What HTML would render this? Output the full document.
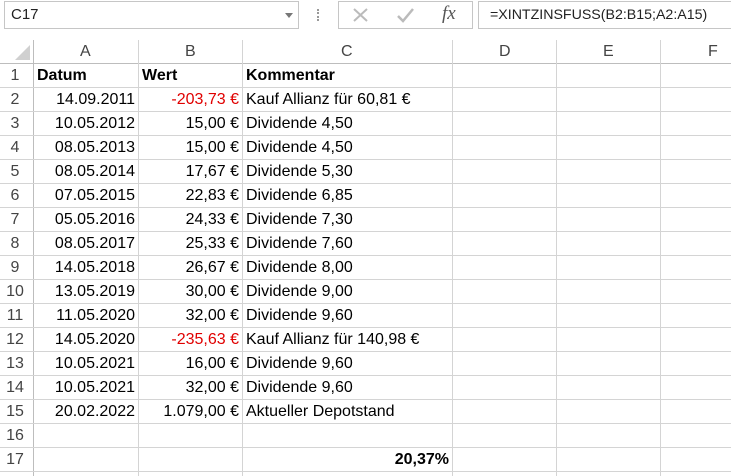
<!DOCTYPE html>
<html><head><meta charset="utf-8"><style>
body{margin:0;width:731px;height:476px;overflow:hidden;background:#fff;font-family:"Liberation Sans",Arial,sans-serif;position:relative}
.a{position:absolute;box-sizing:border-box}
.t{position:absolute;font-size:16px;line-height:24px;white-space:nowrap;color:#000}
.h{color:#444;font-size:16px}
.vl{position:absolute;width:1px;background:#d4d4d4;top:40px;height:436px}
.hl{position:absolute;height:1px;background:#d4d4d4;left:0;width:731px}
</style></head><body>
<div class="a" style="left:0;top:0;width:731px;height:36px;background:#fff"></div>
<div class="a" style="left:4px;top:1px;width:295px;height:28px;border:1px solid #c6c6c6"></div>
<div class="t" style="left:11px;top:3px;color:#222;font-size:15px">C17</div>
<div class="a" style="left:285px;top:13px;width:0;height:0;border-left:4px solid transparent;border-right:4px solid transparent;border-top:5px solid #777"></div>
<div class="a" style="left:317px;top:9px;width:2px;height:12px;border-left:2px dotted #999"></div>
<div class="a" style="left:338px;top:1px;width:135px;height:28px;border:1px solid #c6c6c6"></div>
<svg class="a" style="left:352px;top:7px" width="18" height="16"><path d="M2 2L15 14M15 2L2 14" stroke="#bbb" stroke-width="2"/></svg>
<svg class="a" style="left:396px;top:7px" width="20" height="16"><path d="M2 9L7 14L17 2" stroke="#bbb" stroke-width="2.5" fill="none"/></svg>
<div class="t" style="left:442px;top:2px;font-family:'Liberation Serif',serif;font-style:italic;font-size:19px;color:#555">fx</div>
<div class="a" style="left:478px;top:1px;width:260px;height:28px;border:1px solid #c6c6c6"></div>
<div class="t" style="left:490px;top:3px;color:#222;font-size:14.2px">=XINTZINSFUSS(B2:B15;A2:A15)</div>
<div class="a" style="left:0;top:40px;width:731px;height:24px;border-bottom:1px solid #bdbdbd"></div>
<div class="a" style="left:0;top:40px;width:34px;height:436px;border-right:1px solid #bdbdbd"></div>
<svg class="a" style="left:15px;top:44px" width="16" height="17"><path d="M15 1V16H0Z" fill="#d0d0d0"/></svg>
<div class="vl" style="left:138px"></div><div class="vl" style="left:242px"></div><div class="vl" style="left:452px"></div><div class="vl" style="left:556px"></div><div class="vl" style="left:660px"></div>
<div class="t h" style="left:80px;top:40px">A</div>
<div class="t h" style="left:185px;top:40px">B</div>
<div class="t h" style="left:341px;top:40px">C</div>
<div class="t h" style="left:499px;top:40px">D</div>
<div class="t h" style="left:603px;top:40px">E</div>
<div class="t h" style="left:708px;top:40px">F</div>
<div id="g"></div>
<script>
var rows=[["<b>Datum</b>","<b>Wert</b>","<b>Kommentar</b>"],
["14.09.2011","-203,73 €","Kauf Allianz für 60,81 €",1],
["10.05.2012","15,00 €","Dividende 4,50"],
["08.05.2013","15,00 €","Dividende 4,50"],
["08.05.2014","17,67 €","Dividende 5,30"],
["07.05.2015","22,83 €","Dividende 6,85"],
["05.05.2016","24,33 €","Dividende 7,30"],
["08.05.2017","25,33 €","Dividende 7,60"],
["14.05.2018","26,67 €","Dividende 8,00"],
["13.05.2019","30,00 €","Dividende 9,00"],
["11.05.2020","32,00 €","Dividende 9,60"],
["14.05.2020","-235,63 €","Kauf Allianz für 140,98 €",1],
["10.05.2021","16,00 €","Dividende 9,60"],
["10.05.2021","32,00 €","Dividende 9,60"],
["20.02.2022","1.079,00 €","Aktueller Depotstand"],
["","",""],["","",""]];
var h="";
for(var i=0;i<17;i++){var y=64+i*24;var r=rows[i];
h+='<div class="hl" style="top:'+(y+23)+'px"></div>';
h+='<div class="t h" style="left:0;width:30px;text-align:center;top:'+y+'px">'+(i+1)+'</div>';
if(i==0){h+='<div class="t" style="left:37px;top:'+y+'px">'+r[0]+'</div><div class="t" style="left:142px;top:'+y+'px">'+r[1]+'</div><div class="t" style="left:246px;top:'+y+'px">'+r[2]+'</div>';}
else{h+='<div class="t" style="right:'+(731-135)+'px;top:'+y+'px">'+r[0]+'</div><div class="t" style="right:'+(731-239)+'px;top:'+y+'px;'+(r[3]?'color:#e00000':'')+'">'+r[1]+'</div><div class="t" style="left:246px;top:'+y+'px">'+r[2]+'</div>';}
}
h+='<div class="t" style="right:282px;top:448px;font-weight:bold">20,37%</div>';
document.getElementById("g").innerHTML=h;
</script>
</body></html>
